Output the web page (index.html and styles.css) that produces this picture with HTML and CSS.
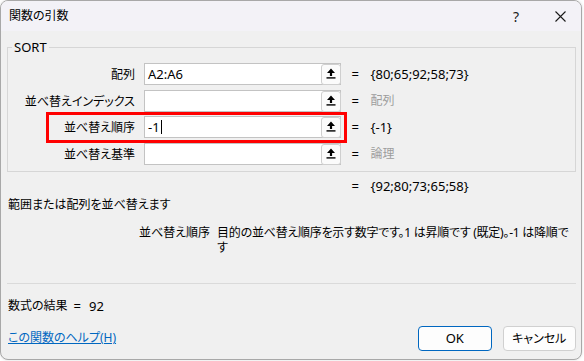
FILE: index.html
```html
<!DOCTYPE html>
<html lang="ja">
<head>
<meta charset="utf-8">
<title>関数の引数</title>
<link rel="stylesheet" href="styles.css">
</head>
<body>
<div class="dialog">
  <div class="titlebar">
    <span class="title">関数の引数</span>
    <span class="help">?</span>
    <svg class="close" width="11" height="11" viewBox="0 0 11 11"><path d="M0.5 0.5 L10.5 10.5 M10.5 0.5 L0.5 10.5" stroke="#1a1a1a" stroke-width="1.1" fill="none"/></svg>
  </div>
  <div class="content">
    <fieldset class="group">
      <legend class="lat">SORT</legend>
      <div class="rows">
        <div class="row">
          <span class="label">配列</span>
          <div class="field"><span class="ftext lat">A2:A6</span><span class="pick"><svg width="10" height="11" viewBox="0 0 10 11"><path d="M5 0.5 L9 5 H6.1 V8 H3.9 V5 H1 Z" fill="#000"/><rect x="0.5" y="9.2" width="9" height="1.4" fill="#000"/></svg></span></div>
          <span class="eq">=</span><span class="val lat">{80;65;92;58;73}</span>
        </div>
        <div class="row">
          <span class="label">並べ替えインデックス</span>
          <div class="field"><span class="ftext"></span><span class="pick"><svg width="10" height="11" viewBox="0 0 10 11"><path d="M5 0.5 L9 5 H6.1 V8 H3.9 V5 H1 Z" fill="#000"/><rect x="0.5" y="9.2" width="9" height="1.4" fill="#000"/></svg></span></div>
          <span class="eq">=</span><span class="val muted">配列</span>
        </div>
        <div class="row hl">
          <span class="label">並べ替え順序</span>
          <div class="field"><span class="ftext lat">-1<span class="caret"></span></span><span class="pick"><svg width="10" height="11" viewBox="0 0 10 11"><path d="M5 0.5 L9 5 H6.1 V8 H3.9 V5 H1 Z" fill="#000"/><rect x="0.5" y="9.2" width="9" height="1.4" fill="#000"/></svg></span></div>
          <span class="eq">=</span><span class="val lat">{-1}</span>
        </div>
        <div class="row">
          <span class="label">並べ替え基準</span>
          <div class="field"><span class="ftext"></span><span class="pick"><svg width="10" height="11" viewBox="0 0 10 11"><path d="M5 0.5 L9 5 H6.1 V8 H3.9 V5 H1 Z" fill="#000"/><rect x="0.5" y="9.2" width="9" height="1.4" fill="#000"/></svg></span></div>
          <span class="eq">=</span><span class="val muted">論理</span>
        </div>
      </div>
    </fieldset>
    <div class="result-row">
      <span class="eq">=</span><span class="val lat">{92;80;73;65;58}</span>
    </div>
    <div class="summary">範囲または配列を並べ替えます</div>
    <div class="argdesc">
      <span class="arglabel">並べ替え順序</span>
      <span class="argtext">目的の並べ替え順序を示す数字です。1 は昇順です (既定)。-1 は降順です</span>
    </div>
    <div class="sep"></div>
    <div class="formula">数式の結果<span class="feq">=</span><span class="fval lat">92</span></div>
    <div class="footer">
      <a class="helplink" href="#">この関数のヘルプ(H)</a>
      <div class="buttons">
        <button class="btn primary">OK</button>
        <button class="btn">キャンセル</button>
      </div>
    </div>
  </div>
</div>
</body>
</html>
```

FILE: styles.css
```css
html, body {
  margin: 0;
  padding: 0;
}
body {
  background: #ffffff;
  font-family: "Noto Sans", "Noto Sans CJK JP", sans-serif;
  font-size: 12px;
  font-feature-settings: "palt";
  color: #000;
  width: 584px;
  height: 361px;
  overflow: hidden;
}
.lat {
  font-size: 13px;
}
.dialog {
  box-sizing: border-box;
  width: 582px;
  height: 360px;
  border: 1px solid #a8a8a8;
  border-radius: 8px;
  overflow: hidden;
  background: #f0f0f0;
  box-shadow: 0 0 3px rgba(0,0,0,0.15);
}
.titlebar {
  height: 30px;
  background: #f3f2f7;
  display: flex;
  align-items: center;
  padding-left: 8px;
}
.title {
  flex: 1;
  line-height: 16px;
}
.help {
  font-size: 14px;
  margin-right: 36px;
  font-family: "Noto Sans", sans-serif;
  color: #1a1a1a;
}
.close {
  margin-right: 15px;
}
.content {
  padding: 0 4px 0 6px;
}
.group {
  box-sizing: border-box;
  width: 569px;
  margin: 8px 0 0 0;
  padding: 8px 0 6px 0;
  border: 1px solid #d6d6d6;
  min-width: 0;
}
.group legend {
  margin-left: 4px;
  padding: 0 2px;
  line-height: 16px;
}
.rows {
  display: flex;
  flex-direction: column;
  gap: 4.5px;
}
.row {
  display: flex;
  align-items: center;
  height: 22px;
}
.row.hl {
  position: relative;
}
.row.hl::after {
  content: "";
  position: absolute;
  left: 38px;
  top: -3.7px;
  width: 301px;
  height: 30.4px;
  box-sizing: border-box;
  border: 3px solid #ff0000;
}
.label {
  width: 127px;
  text-align: right;
  white-space: nowrap;
}
.field {
  box-sizing: border-box;
  width: 197px;
  height: 22px;
  margin-left: 9px;
  background: #fff;
  border: 1px solid #c3c3c3;
  display: flex;
  align-items: center;
}
.ftext {
  flex: 1;
  padding-left: 3px;
  display: flex;
  align-items: center;
  line-height: 16px;
}
.caret {
  display: inline-block;
  width: 1px;
  height: 14px;
  background: #000;
  margin-left: 1px;
}
.pick {
  box-sizing: border-box;
  width: 20px;
  height: 21px;
  margin-right: -1px;
  margin-top: 1px;
  border: 1px solid #cfcfcf;
  border-radius: 3px;
  background: #fbfbfb;
  display: flex;
  justify-content: center;
  padding-top: 3px;
}
.pick svg {
  display: block;
}
.eq {
  width: 19px;
  margin-left: 10.5px;
  font-size: 13px;
  font-family: "Noto Sans", sans-serif;
}
.val {
  line-height: 16px;
}
.muted {
  color: #9d9d9d;
}
.result-row {
  display: flex;
  align-items: center;
  height: 16px;
  margin-top: 6px;
  padding-left: 344.5px;
}
.result-row .eq {
  margin-left: 0;
}
.summary {
  margin-top: 3px;
  line-height: 16px;
  padding-left: 1px;
}
.argdesc {
  display: flex;
  margin-top: 12px;
  padding-left: 132px;
  line-height: 15px;
}
.arglabel {
  white-space: nowrap;
  margin-right: 7px;
}
.argtext {
  width: 358px;
  letter-spacing: -0.25px;
}
.sep {
  margin-top: 28px;
  width: 569px;
  border-top: 1px solid #dadada;
}
.formula {
  margin-top: 14px;
  line-height: 16px;
  padding-left: 1px;
  display: flex;
  align-items: center;
}
.feq {
  margin-left: 6px;
  font-size: 13px;
  font-family: "Noto Sans", sans-serif;
}
.fval {
  margin-left: 8px;
}
.footer {
  margin-top: 12.5px;
  width: 569px;
  display: flex;
  justify-content: space-between;
  align-items: center;
}
.helplink {
  color: #0067c0;
  text-decoration: underline;
  padding-left: 1px;
  line-height: 16px;
}
.buttons {
  display: flex;
  gap: 11px;
}
.btn {
  box-sizing: border-box;
  width: 73.5px;
  height: 24.5px;
  border: 1px solid #d0d0d0;
  border-radius: 4px;
  background: #fdfdfd;
  font-family: "Noto Sans", "Noto Sans CJK JP", sans-serif;
  font-size: 12px;
  font-feature-settings: "palt";
  color: #000;
  padding: 0;
}
.btn.primary {
  border: 1px solid #0067c0;
  font-size: 13px;
}
```
